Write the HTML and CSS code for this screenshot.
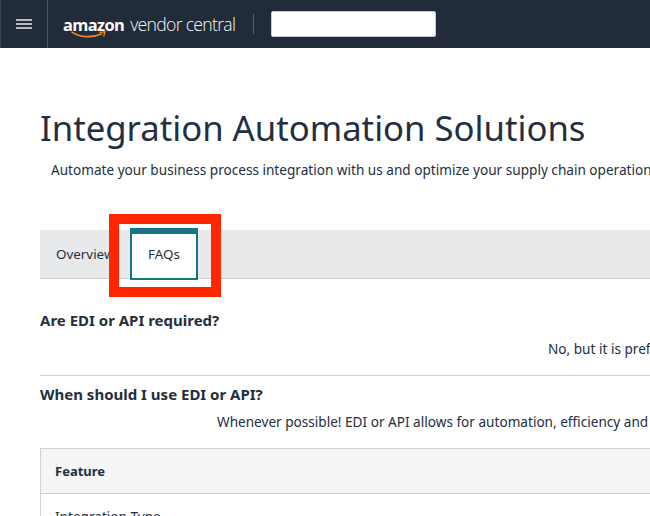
FILE: index.html
```html
<!DOCTYPE html>
<html lang="en">
<head>
<meta charset="utf-8">
<title>Integration Automation Solutions</title>
<link rel="stylesheet" href="styles.css">
</head>
<body>
<header class="topbar">
  <button class="menu" aria-label="Menu">
    <svg width="16" height="10" viewBox="0 0 16 10"><path d="M0 1h16M0 5h16M0 9h16" stroke="#e8eaec" stroke-width="1.6" fill="none"/></svg>
  </button>
  <div class="logo">
    <span class="wordmark">amazon<svg class="smile" width="36" height="8" viewBox="0 0 36 8"><path d="M0.5 0.8C9 6.5 21 7.2 31 2.8" stroke="#f08a1d" stroke-width="1.6" fill="none"/><path d="M28.5 1.4L34 0.8L32.6 5.6" stroke="#f08a1d" stroke-width="1.3" fill="none"/></svg></span>
    <span class="product">vendor central</span>
  </div>
  <span class="divider"></span>
  <div class="search"></div>
</header>
<main class="page">
  <h1>Integration Automation Solutions</h1>
  <p class="lead">Automate your business process integration with us and optimize your supply chain operations.</p>
  <nav class="tabs">
    <span class="tab">Overview</span>
    <span class="tab active">FAQs</span>
  </nav>
  <section class="faq first">
    <h2>Are EDI or API required?</h2>
    <p class="answer a1">No, but it is preferred for vendors.</p>
  </section>
  <section class="faq second">
    <h2>When should I use EDI or API?</h2>
    <p class="answer a2">Whenever possible! EDI or API allows for automation, efficiency and accuracy.</p>
  </section>
  <div class="table">
    <div class="thead">Feature</div>
    <div class="row">Integration Type</div>
  </div>
</main>
<div class="callout"></div>
</body>
</html>
```
FILE: styles.css
```css
* { box-sizing: border-box; }
html, body { margin: 0; padding: 0; height: 516px; overflow: hidden; background: #fff; }
body { font-family: "Noto Sans", sans-serif; color: #232f3e; width: 650px; position: relative; }
.topbar { height: 48px; background: #212b39; display: flex; align-items: center; }
.menu { width: 48px; height: 48px; background: none; border: 0; border-left: 1px solid #3a4452; border-right: 1px solid #4b5563; padding: 0; display: flex; align-items: center; justify-content: center; }
.logo { display: flex; align-items: baseline; margin-left: 16px; color: #fff; height: 48px; padding-top: 12px; }
.wordmark { font-family: "Open Sans", sans-serif; font-weight: 700; font-size: 16.4px; letter-spacing: -0.6px; position: relative; line-height: 24px; margin-left: -1px; }
.smile { position: absolute; left: 8px; top: 18px; }
.product { font-family: "Open Sans", sans-serif; font-weight: 300; font-size: 17.6px; letter-spacing: -0.7px; margin-left: 6px; line-height: 24px; color: #f7f8f8; }
.divider { width: 1px; height: 20px; background: #566170; margin-left: 18px; }
.search { width: 165px; height: 26px; background: #fff; border: 1px solid #c9ccd0; border-radius: 2px; margin-left: 17px; }
.page { padding-top: 57px; }
h1 { margin: 0 0 0 40px; font-size: 34.7px; font-weight: 400; line-height: 46px; white-space: nowrap; color: #232f3e; }
.lead { margin: 9px 0 0 51px; font-size: 13.6px; line-height: 20px; white-space: nowrap; }
.tabs { margin: 50px 0 0 40px; height: 49px; background: #e8e9eb; border-bottom: 1px solid #c9ccd0; display: flex; }
.tab { font-size: 13.4px; line-height: 48px; padding-left: 16px; width: 90px; overflow: hidden; white-space: nowrap; }
.tab.active { width: 68px; height: 52px; margin-top: -2px; background: #fff; border: 2px solid #147688; border-top-width: 6px; text-align: center; padding: 0; line-height: 40px; }
.faq { margin-left: 40px; }
.first { height: 97px; border-bottom: 1px solid #d0d2d5; padding-top: 31px; }
.first .answer { margin-top: 9px; }
.second { padding-top: 8px; }
h2 { margin: 0; font-size: 15px; font-weight: 700; line-height: 20px; white-space: nowrap; }
.answer { margin: 8px 0 0; font-size: 13.6px; line-height: 20px; white-space: nowrap; }
.a1 { padding-left: 508px; }
.a2 { padding-left: 177px; }
.table { margin: 16px 0 0 40px; border: 1px solid #cfd1d4; border-right: 0; }
.thead { height: 45px; background: #f5f5f5; border-bottom: 1px solid #cfd1d4; font-size: 13px; font-weight: 700; line-height: 44px; padding-left: 14px; }
.row { font-size: 13.6px; line-height: 20px; padding: 13px 0 0 14px; }
.callout { position: absolute; left: 109px; top: 214px; width: 112px; height: 83px; border: 10px solid #ff2600; }
```
